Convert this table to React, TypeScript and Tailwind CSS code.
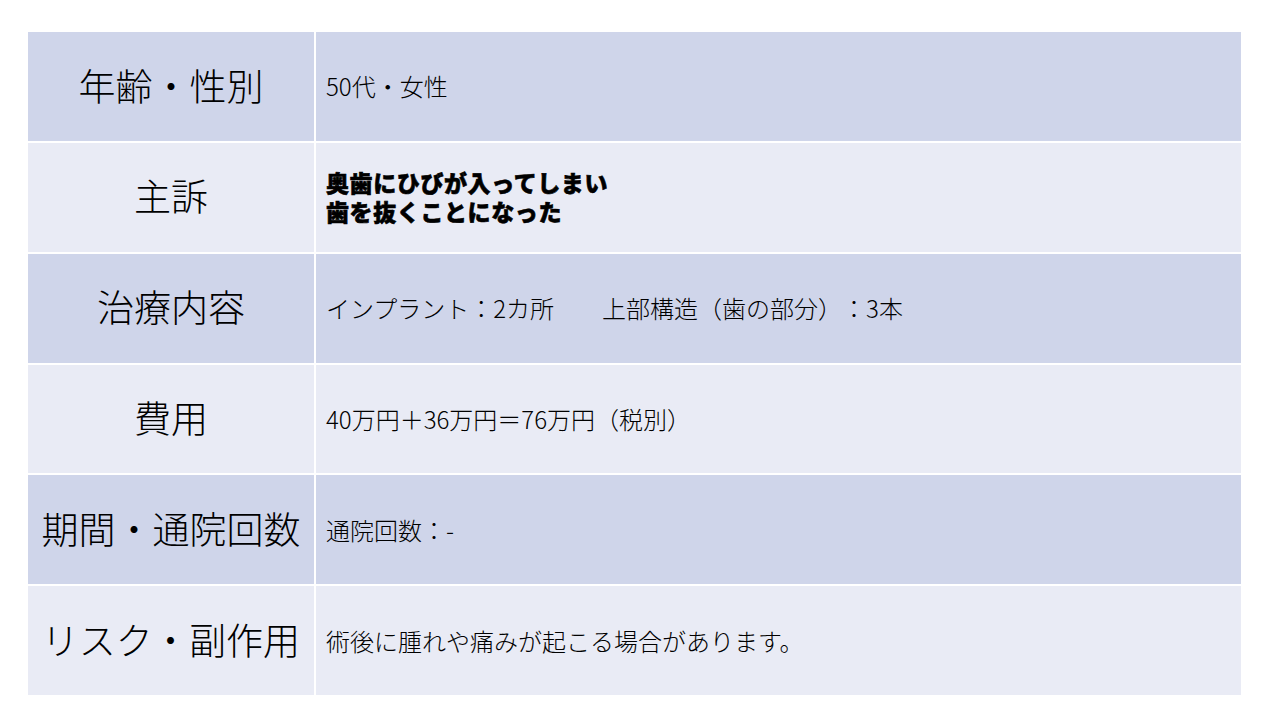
import React from "react";

const rows: { label: string; content: React.ReactNode; dark: boolean }[] = [
  { label: "年齢・性別", content: "50代・女性", dark: true },
  {
    label: "主訴",
    content: (
      <div className="font-black text-[23px] leading-[29px] tracking-[0.6px] [-webkit-text-stroke:0.6px_black]">
        <div>奥歯にひびが入ってしまい</div>
        <div>歯を抜くことになった</div>
      </div>
    ),
    dark: false,
  },
  { label: "治療内容", content: "インプラント：2カ所　　上部構造（歯の部分）：3本", dark: true },
  { label: "費用", content: "40万円＋36万円＝76万円（税別）", dark: false },
  { label: "期間・通院回数", content: "通院回数：-", dark: true },
  { label: "リスク・副作用", content: "術後に腫れや痛みが起こる場合があります。", dark: false },
];

export default function App() {
  return (
    <div
      className="w-[1280px] h-[720px] bg-white text-black pt-[32px] pl-[28px]"
      style={{ fontFamily: '"Noto Sans CJK JP", "Noto Sans", sans-serif' }}
    >
      <div className="w-[1213px] h-[663px] grid grid-rows-6 gap-y-[2px]">
        {rows.map((r, i) => (
          <div key={i} className="grid grid-cols-[286px_1fr] gap-x-[2px]">
            <div
              className={`flex items-center justify-center text-[37px] font-light pb-[2px] ${
                r.dark ? "bg-[#cfd5ea]" : "bg-[#e9ebf5]"
              }`}
            >
              {r.label}
            </div>
            <div
              className={`flex items-center pl-[10px] text-[24px] font-light [text-spacing-trim:space-all] ${
                r.dark ? "bg-[#cfd5ea]" : "bg-[#e9ebf5]"
              }`}
            >
              {r.content}
            </div>
          </div>
        ))}
      </div>
    </div>
  );
}
